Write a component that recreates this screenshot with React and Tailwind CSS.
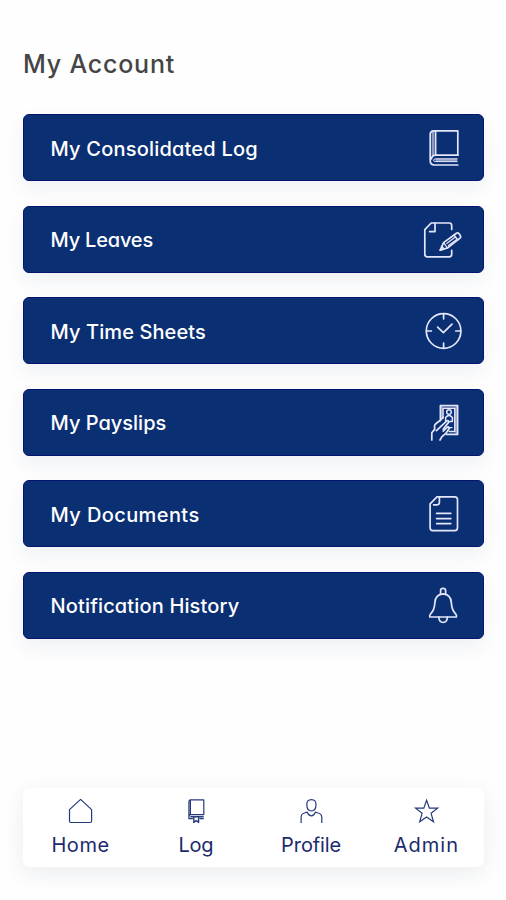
import React from "react";

function RowIcon({ children }) {
  return (
    <svg
      className="mt-px size-10 shrink-0"
      viewBox="0 0 40 40"
      fill="none"
      stroke="#e4e6fa"
      strokeWidth="1.7"
      strokeLinecap="round"
      strokeLinejoin="round"
    >
      {children}
    </svg>
  );
}

const BookIcon = () => (
  <RowIcon>
    <path d="M34.8 27.2V2.8H10.8Q7.2 2.8 7.2 6.6V32.6Q7.2 37 11.4 37H34.8" />
    <path d="M12.6 3V27.2H34.8" />
    <path d="M12.6 27.2Q8.8 27.5 8.4 31" />
    <path d="M34.2 32.2H12.4" strokeWidth="3" opacity="0.6" strokeLinecap="butt" />
    <path d="M34.2 30.8H12.8Q10.6 31 10.4 32.2Q10.5 33.6 12.8 33.6H34.2" strokeWidth="1" />
    <path d="M10 4V27" strokeWidth="2.6" opacity="0.6" />
  </RowIcon>
);

const LeaveIcon = () => (
  <RowIcon>
    <path d="M28.7 9.4V5.6Q28.7 3 26.2 3H8.2L1.8 9.6V34.2Q1.8 36.8 4.4 36.8H26.2Q28.7 36.8 28.7 34.2V30.4" />
    <path d="M12 3V11.6H6.6" />
    <path d="M17.2 30.2L20.6 22.6L33.4 13.2Q34.8 12.2 35.9 13.5L37.4 15.7Q38.3 17.2 37 18.2L24.4 28Z" />
    <path d="M20.6 22.6L24.4 28M31 15L34.8 20M23.8 23.4L31.6 17.6M25.6 25.6L33 20" strokeWidth="1.3" />
    <path d="M17.2 30.2L20.8 28.6L18.6 26.6" />
  </RowIcon>
);

const ClockIcon = () => (
  <RowIcon>
    <circle cx="20.6" cy="20" r="17.3" />
    <path d="M20.6 3V7.8M20.6 32.2V37M3.6 20H8.4M32.8 20H37.6" />
    <path d="M14.6 16.2L20.4 21.6L29 13.2" />
  </RowIcon>
);

const PayslipIcon = () => (
  <RowIcon>
    <path d="M17.4 17.6V2.6H34.6V31.4H23.6" />
    <path d="M20 15V5.2H31.8V28.6H26.2" strokeWidth="1.5" />
    <circle cx="26" cy="9" r="2.3" strokeWidth="1.5" />
    <path d="M22.6 17.6V14.6Q26 10.6 29.4 14.6V18.6H26" strokeWidth="1.5" />
    <path d="M24.4 24.6H29" strokeWidth="1.3" />
    <path d="M8.8 37V29.8L11.6 26.4V22.6Q12 21.2 13.4 20.2L17.4 17.2L20.2 14.4" />
    <path d="M13.4 27.6L23.8 17.8Q25.8 17.2 25.6 19.4L20.2 26.2" />
    <path d="M17 37L19 33.6L22.8 30.4L26.2 25.4Q26.4 23.4 24.4 24L20.2 28.2" />
    <path d="M18.7 4V15.4M33.2 4V30" strokeWidth="2" opacity="0.55" />
  </RowIcon>
);

const DocumentIcon = () => (
  <RowIcon>
    <path d="M14 2.8H31.8Q34.5 2.8 34.5 5.6V33.8Q34.5 36.6 31.8 36.6H9.8Q7.1 36.6 7.1 33.8V9.8Z" />
    <path d="M16.4 3V8.6Q16.4 10.8 14.2 10.8H10.6" />
    <path d="M13.6 19.4H27.8M13.6 24.6H27.8M13.6 29.6H27.8" />
  </RowIcon>
);

const BellIcon = () => (
  <RowIcon>
    <path d="M17.6 8.2V4.6Q17.6 2.4 20.1 2.4Q22.6 2.4 22.6 4.6V8.2" />
    <path d="M20.1 7.8Q12.4 8.4 11.9 16.4C11.6 22.8 10.2 25.4 7.4 28.2Q6.2 29.6 6.8 31H33.4Q34 29.6 32.8 28.2C30 25.4 28.6 22.8 28.3 16.4Q27.8 8.4 20.1 7.8Z" />
    <path d="M15.8 31.2Q16.2 36.4 20.1 36.4Q24 36.4 24.4 31.2" />
  </RowIcon>
);

function NavIcon({ children }) {
  return (
    <svg
      className="size-7"
      viewBox="0 0 28 28"
      fill="none"
      stroke="#243a7a"
      strokeWidth="1.2"
      strokeLinejoin="round"
    >
      {children}
    </svg>
  );
}

const HomeIcon = () => (
  <NavIcon>
    <path d="M2.5 12.6L13.6 2.4L24.6 12.6V24Q24.6 25.5 23.2 25.5H3.9Q2.5 25.5 2.5 24Z" />
  </NavIcon>
);

const LogIcon = () => (
  <NavIcon>
    <path d="M8.4 17.6V2.9H21.8V17.6H8.4M8.4 2.9Q6.9 3 6.9 5V21.6H10.8M8.4 17.6Q7 18 7 20M21.8 21.6H17.6" />
    <path d="M8.4 19.7H21.6M11.8 20V25.4L14.2 23.5L16.6 25.4V20" strokeWidth="1.4" />
  </NavIcon>
);

const ProfileIcon = () => (
  <NavIcon>
    <path d="M14.4 2.6C11.2 2.6 9.8 4.6 9.8 7.6C9.8 11.4 11.6 14 14.4 14C17.2 14 19 11.4 19 7.6C19 4.6 17.6 2.6 14.4 2.6Z" />
    <path d="M4.1 26V20.4Q4.1 16.8 7.4 16L10.2 15.2Q11.8 18.8 14.4 18.8Q16.8 18.8 18.4 15.2L21.2 16Q24.8 16.8 24.8 20.4V26" />
  </NavIcon>
);

const StarIcon = () => (
  <NavIcon>
    <path strokeLinejoin="miter" d="M14.6 3.2L17.4 11.2H25.6L19.1 16.3L21.5 24.8L14.6 20L7.7 24.8L10.1 16.3L3.6 11.2H11.8Z" />
  </NavIcon>
);

const rows = [
  { label: "My Consolidated Log", Icon: BookIcon, spacing: "tracking-[0.2px]" },
  { label: "My Leaves", Icon: LeaveIcon, spacing: "tracking-[-0.2px]" },
  { label: "My Time Sheets", Icon: ClockIcon, spacing: "tracking-[0.1px]" },
  { label: "My Payslips", Icon: PayslipIcon, spacing: "tracking-[0px]" },
  { label: "My Documents", Icon: DocumentIcon, spacing: "tracking-[0.4px]" },
  { label: "Notification History", Icon: BellIcon, spacing: "tracking-[0.15px]" },
];

const tabs = [
  { label: "Home", Icon: HomeIcon, spacing: "tracking-[0.6px]" },
  { label: "Log", Icon: LogIcon, spacing: "tracking-[-0.2px]" },
  { label: "Profile", Icon: ProfileIcon, spacing: "tracking-[-0.1px]" },
  { label: "Admin", Icon: StarIcon, spacing: "tracking-[1px]" },
];

export default function App() {
  return (
    <div className="flex h-[900px] w-[506px] flex-col overflow-hidden bg-[#fefefe] pr-[22px] pl-[23px] font-['Inter',sans-serif] [font-feature-settings:'cv11']">
      <h1 className="mt-12 h-8 text-[25px] leading-8 font-[550] tracking-[0.8px] whitespace-nowrap text-[#454545]">
        My Account
      </h1>
      <main className="mt-[34.4px] flex flex-col gap-[24.5px]">
        {rows.map(({ label, Icon, spacing }) => (
          <button
            key={label}
            className="flex h-[67px] items-center justify-between rounded-md border border-[#07146b] bg-[#0b2f73] pr-5 pl-[26.5px] text-left shadow-[0_8px_20px_rgba(30,50,110,0.07)]"
          >
            <span className={`pt-[1.4px] text-[20px] leading-7 font-[550] whitespace-nowrap text-white ${spacing}`}>{label}</span>
            <Icon />
          </button>
        ))}
      </main>
      <nav className="mt-auto mb-[33.5px] grid h-[79px] grid-cols-4 rounded-lg bg-white shadow-[0_6px_22px_rgba(30,50,90,0.09)]">
        {tabs.map(({ label, Icon, spacing }) => (
          <a key={label} className="flex flex-col items-center pt-[9px] text-[#1b2b6d]">
            <Icon />
            <span className={`mt-1.5 text-[20px] leading-7 whitespace-nowrap ${spacing}`}>{label}</span>
          </a>
        ))}
      </nav>
    </div>
  );
}
